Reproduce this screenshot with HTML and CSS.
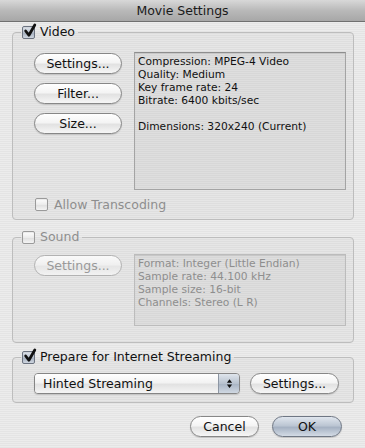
FILE: index.html
```html
<!DOCTYPE html>
<html lang="en">
<head>
    <meta charset="UTF-8">
    <title>Movie Settings</title>
    <link rel="stylesheet" href="styles.css">
</head>
<body>
    <div class="titlebar">Movie Settings</div>

    <div class="content">
        <fieldset class="group">
            <legend><span class="check on"><svg viewBox="0 0 14 14"><path d="M2.5 6.5 L5.5 10.5 L11 1"/></svg></span>Video</legend>
            <div class="group-body">
                <div class="buttons">
                    <button class="btn">Settings...</button>
                    <button class="btn">Filter...</button>
                    <button class="btn">Size...</button>
                </div>
                <div class="info video-info">
                    Compression: MPEG-4 Video<br>
                    Quality: Medium<br>
                    Key frame rate: 24<br>
                    Bitrate: 6400 kbits/sec<br>
                    <br>
                    Dimensions: 320x240 (Current)
                </div>
            </div>
            <div class="check-row disabled"><span class="check"></span>Allow Transcoding</div>
        </fieldset>

        <fieldset class="group sound">
            <legend class="disabled"><span class="check"></span>Sound</legend>
            <div class="group-body">
                <div class="buttons">
                    <button class="btn" disabled>Settings...</button>
                </div>
                <div class="info sound-info disabled">
                    Format: Integer (Little Endian)<br>
                    Sample rate: 44.100 kHz<br>
                    Sample size: 16-bit<br>
                    Channels: Stereo (L R)
                </div>
            </div>
        </fieldset>

        <fieldset class="group streaming">
            <legend><span class="check on"><svg viewBox="0 0 14 14"><path d="M2.5 6.5 L5.5 10.5 L11 1"/></svg></span>Prepare for Internet Streaming</legend>
            <div class="stream-row">
                <div class="popup">
                    <span class="popup-label">Hinted Streaming</span>
                    <span class="popup-arrows">
                        <svg viewBox="0 0 8 12"><path d="M4 1 L7 5 L1 5 Z M4 11 L7 7 L1 7 Z"/></svg>
                    </span>
                </div>
                <button class="btn stream-settings">Settings...</button>
            </div>
        </fieldset>

        <div class="actions">
            <button class="btn cancel">Cancel</button>
            <button class="btn default">OK</button>
        </div>
    </div>
</body>
</html>
```

FILE: styles.css
```css
body {
    margin: 0;
    width: 365px;
    height: 448px;
    overflow: hidden;
    font-family: "DejaVu Sans", Verdana, sans-serif;
    font-size: 12.5px;
    color: #111;
    background-color: #e8e8e8;
    background-image: repeating-linear-gradient(180deg, #ececec 0, #ececec 1px, #e4e4e4 1px, #e4e4e4 2px);
}
.titlebar {
    height: 21px;
    line-height: 21px;
    text-align: center;
    font-size: 12.5px;
    color: #1a1a1a;
    background: linear-gradient(#d8d8d8, #b9b9b9 50%, #a7a7a7);
    border-bottom: 1px solid #6f6f6f;
}
.content {
    padding: 2px 11px 0 12px;
}
.group {
    margin: 0;
    padding: 0;
    border: 1px solid #bdbdbd;
    border-radius: 4px;
    background: rgba(0, 0, 0, 0.025);
    min-width: 0;
}
.group legend {
    margin-left: 8px;
    padding: 0 3px 0 1px;
    height: 16px;
    display: flex;
    align-items: center;
    gap: 5px;
    line-height: 16px;
}
.disabled {
    color: #8e8e8e;
}
.check {
    position: relative;
    width: 11px;
    height: 11px;
    border: 1px solid #9a9a9a;
    border-radius: 2px;
    background: linear-gradient(#ffffff, #ececec 50%, #dedede 51%, #f4f4f4);
    box-shadow: inset 0 1px 1px rgba(0, 0, 0, 0.08);
    flex: none;
}
.check.on {
    border-color: #6c7380;
    background: linear-gradient(#e3e8ef, #b7c0cc 50%, #a4afbe 51%, #cfd6e0);
}
.check svg {
    position: absolute;
    left: 0;
    top: -3px;
    width: 15px;
    height: 15px;
    overflow: visible;
}
.check svg path {
    fill: none;
    stroke: #111;
    stroke-width: 2.6;
    stroke-linecap: round;
    stroke-linejoin: round;
}
.group-body {
    display: grid;
    grid-template-columns: 88px 212px;
    column-gap: 12px;
    padding: 12px 0 0 21px;
}
.buttons {
    display: flex;
    flex-direction: column;
    gap: 9px;
    padding-top: 1px;
}
.btn {
    height: 21px;
    padding: 0 6px;
    font-family: inherit;
    font-size: 12.5px;
    color: #111;
    border: 1px solid #878787;
    border-radius: 11px;
    background: linear-gradient(#ffffff, #f4f4f4 45%, #e2e2e2 55%, #f6f6f6);
    box-shadow: 0 1px 1px rgba(0, 0, 0, 0.15);
}
.btn:disabled {
    color: #999;
    border-color: #b2b2b2;
    background: linear-gradient(#fafafa, #f0f0f0 45%, #e6e6e6 55%, #f2f2f2);
    box-shadow: none;
}
.info {
    font-size: 10.7px;
    line-height: 13px;
    padding: 2px 3px;
    border: 1px solid #a4a4a4;
    border-top-color: #8e8e8e;
    background: rgba(0, 0, 0, 0.03);
    box-shadow: inset 0 1px 1px rgba(0, 0, 0, 0.08);
}
.video-info {
    height: 132px;
}
.sound-info {
    height: 66px;
    border-color: #bcbcbc;
}
.check-row {
    display: flex;
    align-items: center;
    gap: 6px;
    height: 16px;
    margin: 6px 0 0 22px;
    padding-bottom: 7px;
}
.sound {
    margin-top: 9px;
}
.sound .group-body {
    padding-top: 9px;
    padding-bottom: 16px;
}
.streaming {
    margin-top: 6px;
}
.stream-row {
    display: flex;
    gap: 10px;
    padding: 8px 0 8px 21px;
}
.popup {
    width: 204px;
    height: 19px;
    display: flex;
    border: 1px solid #858585;
    border-radius: 4px;
    overflow: hidden;
    box-shadow: 0 1px 1px rgba(0, 0, 0, 0.15);
}
.popup-label {
    flex: 1;
    padding-left: 8px;
    line-height: 19px;
    background: linear-gradient(#ffffff, #f3f3f3 45%, #e2e2e2 55%, #f5f5f5);
}
.popup-arrows {
    width: 20px;
    display: flex;
    align-items: center;
    justify-content: center;
    border-left: 1px solid #8d96a3;
    background: linear-gradient(#dfe5ec, #b8c2cf 50%, #a7b3c3 51%, #d0d8e2);
}
.popup-arrows svg {
    width: 7px;
    height: 11px;
    fill: #111;
}
.stream-settings {
    width: 89px;
}
.actions {
    display: flex;
    justify-content: flex-end;
    gap: 13px;
    margin: 13px 12px 0 0;
}
.cancel {
    width: 69px;
}
.default {
    width: 70px;
    border-color: #6f7784;
    background: linear-gradient(#e0e6ee, #bcc6d3 45%, #a6b2c3 55%, #d3dbe5);
}
```
